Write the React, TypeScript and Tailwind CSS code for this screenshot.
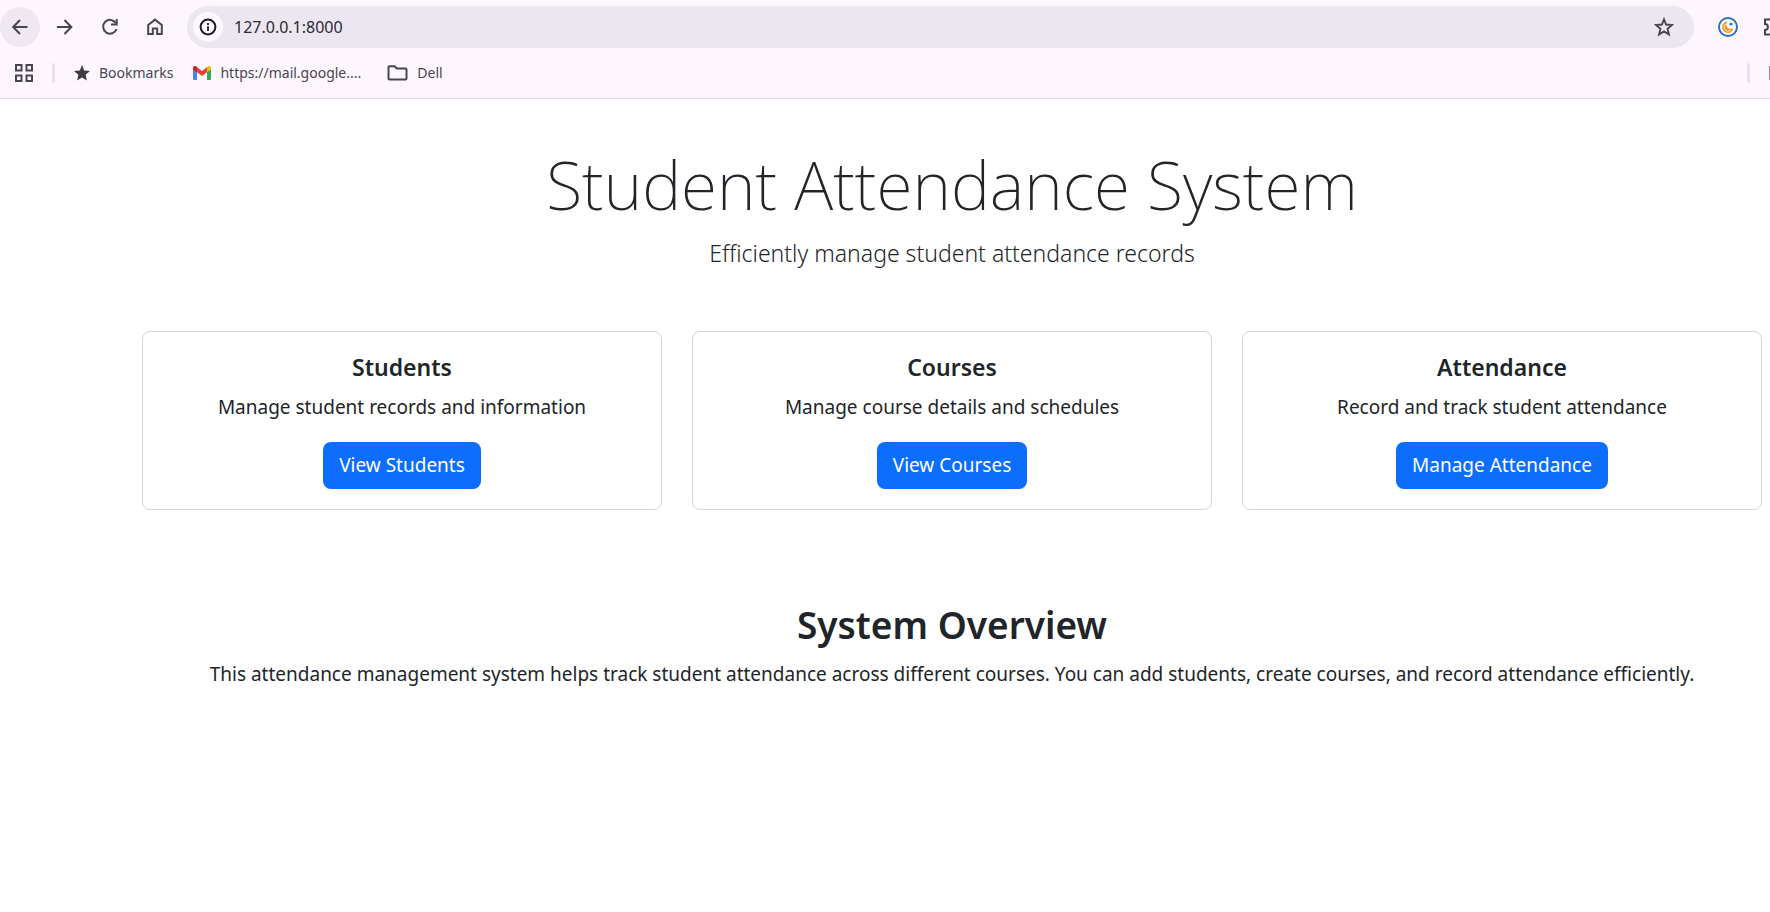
import React from "react";

type IconProps = { className?: string };

const stroke = {
  fill: "none",
  stroke: "currentColor",
  strokeWidth: 2,
} as const;

function BackIcon() {
  return (
    <svg className="size-5 shrink-0" viewBox="0 0 20 20" {...stroke} aria-hidden="true">
      <path d="M17.500 10H3.500M10 3 3.200 10l6.800 7" />
    </svg>
  );
}

function ForwardIcon() {
  return (
    <svg className="size-5 shrink-0" viewBox="0 0 20 20" {...stroke} aria-hidden="true">
      <path d="M2 10h14M9.500 3l6.800 7-6.800 7" />
    </svg>
  );
}

function ReloadIcon() {
  return (
    <svg className="size-5 shrink-0" viewBox="0 0 20 20" {...stroke} aria-hidden="true">
      <path d="M16 6.200A6.900 6.900 0 1 0 16.600 12" />
      <path d="M16.700 2v5.600H11" />
    </svg>
  );
}

function HomeIcon() {
  return (
    <svg className="size-5 shrink-0" viewBox="0 0 20 20" {...stroke} aria-hidden="true">
      <path d="M3.200 17V7.900L10 2.600l6.800 5.300V17h-4.600v-5.400H7.800V17z" />
    </svg>
  );
}

function InfoIcon() {
  return (
    <svg className="size-5" viewBox="0 0 20 20" {...stroke} aria-hidden="true">
      <circle cx="10" cy="10" r="7.400" />
      <path d="M10 9.200V14M10 6v2" strokeWidth="1.800" />
    </svg>
  );
}

function StarIcon({ className }: IconProps) {
  return (
    <svg className={className} viewBox="0 0 20 20" fill="none" stroke="currentColor" strokeWidth="1.900" aria-hidden="true">
      <path d="m10 2.400 2.100 5.100 5.900.45-4.500 3.800 1.400 5.700-4.900-3-4.900 3 1.400-5.700L2 7.950l5.900-.45z" />
    </svg>
  );
}

function SolidStarIcon() {
  return (
    <svg className="size-4 shrink-0 text-[#3f3b46]" viewBox="0 0 16 16" fill="currentColor" aria-hidden="true">
      <path d="m8 0 2.200 5.500 5.800.5-4.400 3.800 1.300 5.800L8 12.500l-4.900 3.100 1.300-5.800L0 6l5.800-.5z" />
    </svg>
  );
}

function AppsIcon() {
  return (
    <svg className="size-[18px] shrink-0" viewBox="0 0 18 18" {...stroke} aria-hidden="true">
      <path d="M1 1h5.500v5.500H1zM11.500 1H17v5.500h-5.500zM1 11.500h5.500V17H1zM11.500 11.500H17V17h-5.500z" />
    </svg>
  );
}

function GmailIcon() {
  return (
    <svg className="h-3.5 w-[18px] shrink-0" viewBox="0 0 18 14" aria-hidden="true">
      <path fill="#4285f4" d="M0 3v9.700C0 13.400.6 14 1.300 14H4V5z" />
      <path fill="#34a853" d="M18 3v9.700c0 .7-.6 1.300-1.300 1.300H14V5z" />
      <path fill="#ea4335" d="M4 1.300 9 5.100l5-3.800v5L9 10.100 4 6.300z" />
      <path fill="#c5221f" d="M0 2.100C0 .4 1.900-.6 3.300.5l.7.6v5.200L0 3.300z" />
      <path fill="#fbbc04" d="M18 2.100c0-1.700-1.900-2.700-3.300-1.600l-.7.600v5.200l4-3z" />
    </svg>
  );
}

function FolderIcon() {
  return (
    <svg className="h-4 w-[21px] shrink-0" viewBox="0 0 21 16" {...stroke} aria-hidden="true">
      <path d="M1.500 2.300c0-.6.400-1 1-1h5.200l2 2.200h8.800c.6 0 1 .4 1 1v9c0 .6-.4 1-1 1h-16c-.6 0-1-.4-1-1z" />
    </svg>
  );
}

function ExtensionLogo() {
  return (
    <svg className="size-5" viewBox="0 0 20 20" aria-hidden="true">
      <circle cx="10" cy="10" r="9" fill="#fff" stroke="#2a72b8" strokeWidth="2" />
      <path d="M9.700 4.300a5.800 5.800 0 1 0 5.900 6.700 3.500 3.500 0 0 1-5.900-6.700z" fill="#f7931e" />
      <path d="M7.600 6.900a4 4 0 0 0 5 6.400" fill="none" stroke="#fff" strokeWidth=".9" />
      <circle cx="13" cy="7" r="1.600" fill="#2a72b8" />
    </svg>
  );
}

function PuzzleIcon() {
  return (
    <svg className="size-5" viewBox="0 0 20 20" {...stroke} aria-hidden="true">
      <path d="M2 2.500h5.500a2.500 2.500 0 0 1 5 0H16v5a2.500 2.500 0 0 1 0 5v5H2v-4.600a2.900 2.900 0 0 0 0-5.800z" />
    </svg>
  );
}

function NavButton({ label, active, children }: { label: string; active?: boolean; children: React.ReactNode }) {
  return (
    <button
      type="button"
      aria-label={label}
      className={
        active
          ? "flex size-10 shrink-0 items-center justify-center rounded-full bg-[#efe8f3]"
          : "flex size-10 shrink-0 items-center justify-center rounded-full"
      }
    >
      {children}
    </button>
  );
}

function BrowserBar() {
  return (
    <header className="border-b border-[#e4d9ea] bg-[#fdf6ff] text-[#49454f]">
      <div className="flex items-center pt-1.5">
        <nav aria-label="Browser" className="flex gap-[5px]">
          <NavButton label="Back" active><BackIcon /></NavButton>
          <NavButton label="Forward"><ForwardIcon /></NavButton>
          <NavButton label="Reload"><ReloadIcon /></NavButton>
          <NavButton label="Home"><HomeIcon /></NavButton>
        </nav>
        <div className="mr-3.5 ml-3 flex h-[42px] grow items-center rounded-full bg-[#ece6f0] pr-5 pl-1.5">
          <button type="button" aria-label="Site information" className="flex size-[30px] items-center justify-center rounded-full bg-[#fdf6ff] text-[#1d1b20]">
            <InfoIcon />
          </button>
          <input
            type="text"
            aria-label="Address"
            defaultValue="127.0.0.1:8000"
            className="ml-[11px] min-w-0 grow bg-transparent text-base text-[#2c2931] outline-none"
          />
          <button type="button" aria-label="Bookmark this page">
            <StarIcon className="size-5" />
          </button>
        </div>
        <div className="flex w-[62px] shrink-0 gap-[5px] overflow-hidden">
          <NavButton label="Extension"><ExtensionLogo /></NavButton>
          <NavButton label="Extensions"><PuzzleIcon /></NavButton>
        </div>
      </div>
      <div className="flex h-[50px] items-center overflow-hidden pl-[15px] text-sm">
        <button type="button" aria-label="Apps"><AppsIcon /></button>
        <span className="ml-[19px] h-5 w-[3px] rounded-full bg-[#eaddf6]" />
        <a href="#bookmarks" className="ml-[19px] flex items-center gap-[9px]"><SolidStarIcon />Bookmarks</a>
        <a href="#mail" className="ml-5 flex items-center gap-[9px]"><GmailIcon />https://mail.google....</a>
        <a href="#dell" className="ml-[26px] flex items-center gap-[9px]"><FolderIcon />Dell</a>
        <span className="ml-auto h-5 w-[3px] rounded-full bg-[#eaddf6]" />
        <span className="ml-[19px] h-3.5 w-px bg-[#8f8a96]" />
      </div>
    </header>
  );
}

const cards = [
  { title: "Students", text: "Manage student records and information", action: "View Students", href: "#students" },
  { title: "Courses", text: "Manage course details and schedules", action: "View Courses", href: "#courses" },
  { title: "Attendance", text: "Record and track student attendance", action: "Manage Attendance", href: "#attendance" },
];

export default function App() {
  return (
    <div className="min-h-screen bg-white font-['Noto_Sans','Open_Sans',sans-serif] text-[#212529]">
      <BrowserBar />
      <main className="pt-10 pr-2 pl-[142px] text-center text-[19px] leading-[30px]">
        <h1 className="text-[66px] leading-[90px] font-extralight">Student Attendance System</h1>
        <p className="mt-[5px] text-[23px] leading-[38px] font-light">Efficiently manage student attendance records</p>
        <div className="mt-[59px] grid grid-cols-3 gap-[30px]">
          {cards.map((card) => (
            <section key={card.title} className="rounded-lg border border-[#d3d4d5] p-5">
              <h2 className="text-[23px] leading-[30px] font-semibold">{card.title}</h2>
              <p className="mt-2.5">{card.text}</p>
              <a href={card.href} className="mt-5 inline-block rounded-lg bg-[#0d6efd] px-4 py-2 leading-[31px] text-white">
                {card.action}
              </a>
            </section>
          ))}
        </div>
        <section className="mt-[91px]">
          <h2 className="text-[37px] leading-[48px] font-semibold">System Overview</h2>
          <p className="mt-2.5">
            This attendance management system helps track student attendance across different courses. You can add
            students, create courses, and record attendance efficiently.
          </p>
        </section>
      </main>
    </div>
  );
}
